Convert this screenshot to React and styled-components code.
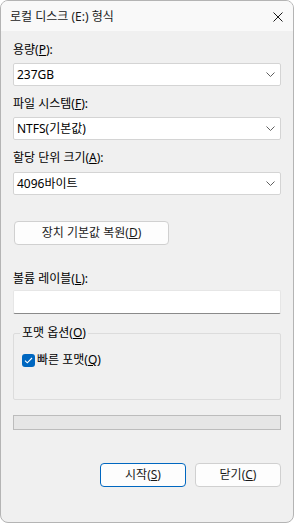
import React from "react";
import styled, { createGlobalStyle } from "styled-components";

const Global = createGlobalStyle`
  html, body { margin: 0; padding: 0; background: #ffffff; }
  * { box-sizing: border-box; }
`;

const FONT = `"Noto Sans", "Noto Sans CJK KR", sans-serif`;

const Window = styled.div`
  width: 294px;
  height: 523px;
  border: 1px solid #b4b4b4;
  border-radius: 8px;
  overflow: hidden;
  background: #f0f0f0;
  display: flex;
  flex-direction: column;
  font-family: ${FONT};
  font-size: 12px;
  line-height: 16px;
  color: #000;
`;

const TitleBar = styled.div`
  height: 30px;
  flex: none;
  background: #f9f9f9;
  display: flex;
  align-items: center;
  justify-content: space-between;
  padding: 1px 10px 0 9px;
`;

const Title = styled.span`
  font-size: 12px;
  line-height: 16px;
  color: #1a1a1a;
`;

const CloseIcon = styled.svg`
  width: 10px;
  height: 10px;
  display: block;
`;

const Body = styled.div`
  flex: 1;
  display: flex;
  flex-direction: column;
  padding: 11px 12px 0 12px;
`;

const Label = styled.div`
  height: 16px;
  margin-top: ${(p) => p.$mt || 0}px;
  white-space: nowrap;
`;

const Combo = styled.div`
  margin-top: ${(p) => p.$mt || 5}px;
  height: 23px;
  background: #ffffff;
  border: 1px solid #d4d4d4;
  border-radius: 2px;
  display: flex;
  align-items: center;
  justify-content: space-between;
  padding: 0 5px 0 3px;
`;

const ComboText = styled.span`
  white-space: nowrap;
`;

const Chevron = styled.svg`
  width: 9px;
  height: 5px;
  display: block;
`;

const Button = styled.div`
  height: 24px;
  width: ${(p) => p.$w}px;
  margin-left: ${(p) => p.$ml || 0}px;
  margin-top: ${(p) => p.$mt || 0}px;
  background: #fdfdfd;
  border: 1px solid ${(p) => (p.$primary ? "#0067c0" : "#d0d0d0")};
  border-radius: 4px;
  display: flex;
  align-items: center;
  justify-content: center;
  white-space: nowrap;
  color: #1a1a1a;
`;

const TextInput = styled.div`
  margin-top: 3px;
  height: 24px;
  background: #ffffff;
  border: 1px solid #e6e6e6;
  border-bottom-color: #8a8a8a;
  border-radius: 2px;
`;

const Group = styled.fieldset`
  margin: 11px 0 0 0;
  padding: 11px 8px 31px 8px;
  border: 1px solid #dcdcdc;
  border-radius: 2px;
  min-width: 0;
`;

const Legend = styled.legend`
  padding: 0 2px;
  margin-left: -2px;
  line-height: 16px;
  height: 16px;
`;

const CheckRow = styled.div`
  display: flex;
  align-items: center;
  gap: 2px;
  height: 16px;
`;

const CheckBox = styled.div`
  width: 13px;
  height: 13px;
  border-radius: 3px;
  background: #0067c0;
  display: flex;
  align-items: center;
  justify-content: center;
  flex: none;
`;

const Progress = styled.div`
  margin-top: 15px;
  height: 15px;
  background: #e6e6e6;
  border: 1px solid #bcbcbc;
`;

const ButtonRow = styled.div`
  margin-top: 33px;
  display: flex;
  justify-content: flex-end;
  gap: 9px;
`;

const ChevronDown = () => (
  <Chevron viewBox="0 0 9 5">
    <path d="M0.5 0.5 L4.5 4.5 L8.5 0.5" fill="none" stroke="#5f5f5f" strokeWidth="1" />
  </Chevron>
);

export default function App() {
  return (
    <>
      <Global />
      <Window>
        <TitleBar>
          <Title>로컬 디스크 (E:) 형식</Title>
          <CloseIcon viewBox="0 0 10 10">
            <path d="M0.5 0.5 L9.5 9.5 M9.5 0.5 L0.5 9.5" stroke="#1a1a1a" strokeWidth="1" fill="none" />
          </CloseIcon>
        </TitleBar>
        <Body>
          <Label>용량(<u>P</u>):</Label>
          <Combo>
            <ComboText>237GB</ComboText>
            <ChevronDown />
          </Combo>
          <Label $mt={10}>파일 시스템(<u>F</u>):</Label>
          <Combo>
            <ComboText>NTFS(기본값)</ComboText>
            <ChevronDown />
          </Combo>
          <Label $mt={10}>할당 단위 크기(<u>A</u>):</Label>
          <Combo $mt={6}>
            <ComboText>4096바이트</ComboText>
            <ChevronDown />
          </Combo>
          <Button $w={155} $ml={1} $mt={26}>
            장치 기본값 복원(<u>D</u>)
          </Button>
          <Label $mt={26}>볼륨 레이블(<u>L</u>):</Label>
          <TextInput />
          <Group>
            <Legend>포맷 옵션(<u>O</u>)</Legend>
            <CheckRow>
              <CheckBox>
                <svg width="9" height="7" viewBox="0 0 9 7">
                  <path d="M1 3.6 L3.3 5.8 L8 1" fill="none" stroke="#ffffff" strokeWidth="1.1" />
                </svg>
              </CheckBox>
              <span>빠른 포맷(<u>Q</u>)</span>
            </CheckRow>
          </Group>
          <Progress />
          <ButtonRow>
            <Button $w={86} $primary>
              시작(<u>S</u>)
            </Button>
            <Button $w={86}>
              닫기(<u>C</u>)
            </Button>
          </ButtonRow>
        </Body>
      </Window>
    </>
  );
}
